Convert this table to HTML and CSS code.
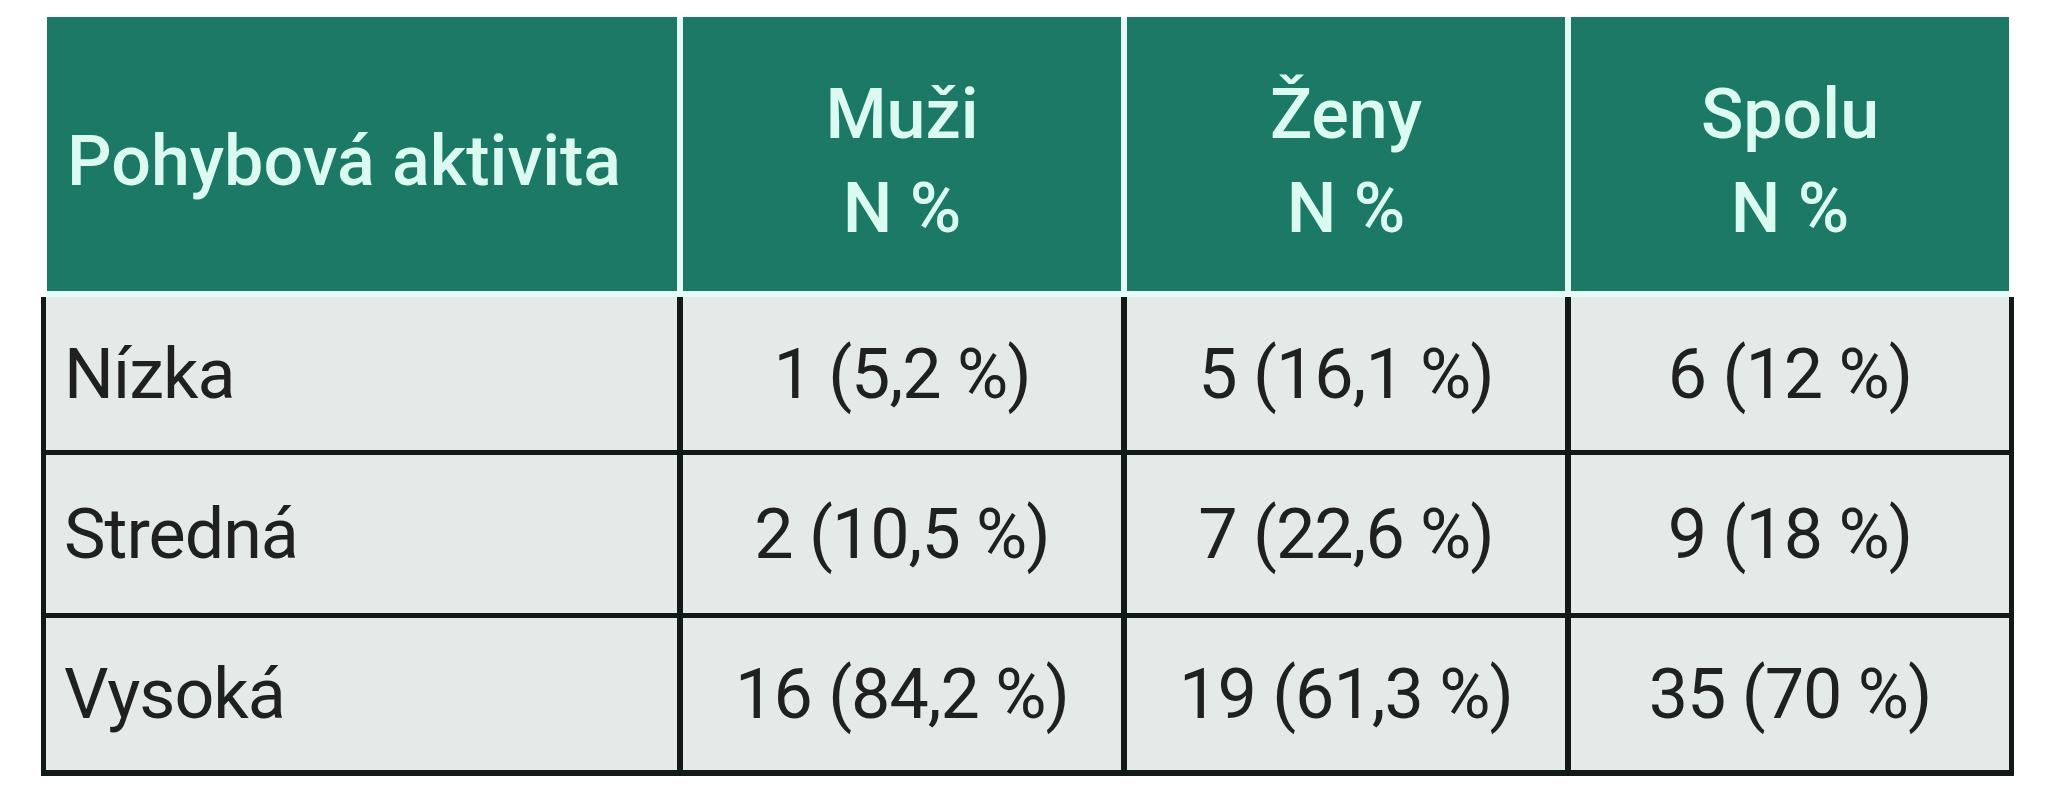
FILE: index.html
```html
<!DOCTYPE html>
<html lang="sk">
<head>
<meta charset="utf-8">
<title>Pohybová aktivita</title>
<link rel="stylesheet" href="styles.css">
</head>
<body>
<div class="tbl">
  <div class="thead">
    <div class="th th-left">Pohybová aktivita</div>
    <div class="th">Muži<br>N %</div>
    <div class="th">Ženy<br>N %</div>
    <div class="th">Spolu<br>N %</div>
  </div>
  <div class="tbody">
    <div class="td td-left">Nízka</div>
    <div class="td">1 (5,2 %)</div>
    <div class="td">5 (16,1 %)</div>
    <div class="td">6 (12 %)</div>

    <div class="td td-left">Stredná</div>
    <div class="td">2 (10,5 %)</div>
    <div class="td">7 (22,6 %)</div>
    <div class="td">9 (18 %)</div>

    <div class="td td-left">Vysoká</div>
    <div class="td">16 (84,2 %)</div>
    <div class="td">19 (61,3 %)</div>
    <div class="td">35 (70 %)</div>
  </div>
</div>
</body>
</html>
```
FILE: styles.css
```css
html, body {
  margin: 0;
  padding: 0;
  background: #ffffff;
}

body {
  font-family: Roboto, "Liberation Sans", sans-serif;
}

.tbl {
  margin: 17px 0 0 41px;
  width: 1973px;
}

.thead {
  display: grid;
  grid-template-columns: 630px 438px 438px 438px;
  column-gap: 6px;
  margin-left: 6px;
  width: 1962px;
  background: #e4fbf6;
  padding-bottom: 6px;
}

.th {
  background: #1b7966;
  color: #dcfbf0;
  height: 274px;
  box-sizing: border-box;
  padding-top: 14px;
  display: flex;
  align-items: center;
  justify-content: center;
  text-align: center;
  font-size: 70px;
  font-weight: 500;
  line-height: 94px;
}

.th-left {
  justify-content: flex-start;
  text-align: left;
  padding-left: 20px;
}

.tbody {
  display: grid;
  grid-template-columns: 631px 438px 438px 438px;
  grid-template-rows: 153px 158px 152px;
  column-gap: 6px;
  row-gap: 5px;
  padding: 0 5px 6px 5px;
  background: #121a17;
}

.td {
  background: #e3eae7;
  color: #1e2120;
  display: flex;
  align-items: center;
  justify-content: center;
  font-size: 70px;
  font-weight: 400;
  letter-spacing: -1px;
}

.td-left {
  justify-content: flex-start;
  padding-left: 18px;
}
```
